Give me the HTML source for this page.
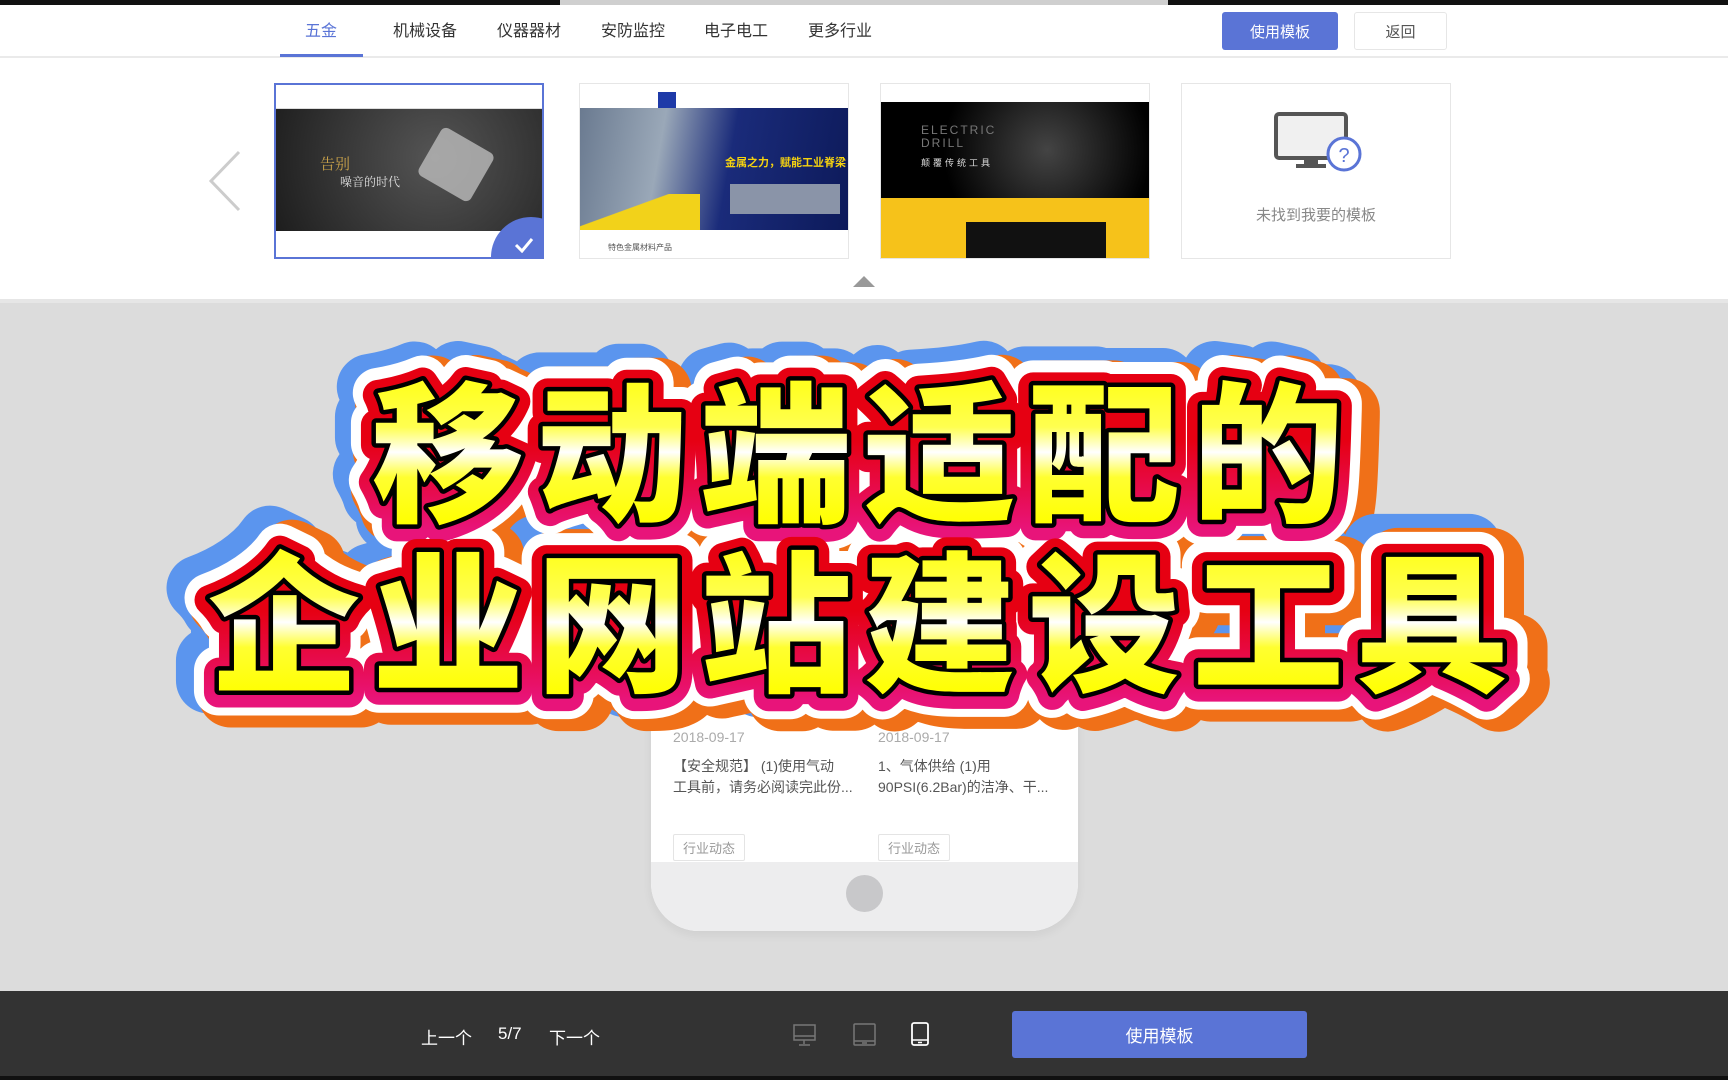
<!DOCTYPE html>
<html><head><meta charset="utf-8"><style>
*{margin:0;padding:0;box-sizing:border-box}
body{width:1728px;height:1080px;overflow:hidden;position:relative;background:#dcdcdc;font-family:"Liberation Sans","Noto Sans CJK SC",sans-serif}
.abs{position:absolute}
#top{left:0;top:0;width:1728px;height:303px;background:#fff;border-bottom:4px solid #e6e6e6}
#blk{left:0;top:0;width:1728px;height:5px;background:#111}
#blk i{position:absolute;left:560px;width:608px;top:0;height:5px;background:#cfcfcf}
#hdr{left:0;top:5px;width:1728px;height:53px;border-bottom:2px solid #eaeaea}
.tab{position:absolute;top:12px;font-size:16px;color:#333;transform:translateX(-50%)}
.btn{position:absolute;top:7px;height:38px;border-radius:3px;font-size:15px;display:flex;align-items:center;justify-content:center}
.card{position:absolute;top:83px;width:270px;height:176px;overflow:hidden;border:1px solid #e6e6e6;background:#fff}
#grey{left:0;top:307px;width:1728px;height:684px;background:#dcdcdc}
#phone{left:651px;top:560px;width:427px;height:371px;background:#fff;border-radius:0 0 48px 48px;overflow:hidden;box-shadow:0 4px 10px rgba(0,0,0,.06)}
.pt{position:absolute;font-size:14px;color:#555;line-height:21px}
.tag{position:absolute;border:1px solid #e4e4e4;color:#999;font-size:13px;padding:3px 9px;border-radius:2px}
#bar{left:0;top:991px;width:1728px;height:89px;background:#333}
.bt{position:absolute;top:1024px;color:#fff;font-size:17px}
svg text.t{font-family:"Noto Sans CJK SC","WenQuanYi Zen Hei",sans-serif;font-weight:900;font-size:152px;letter-spacing:12px;stroke-linejoin:round;stroke-linecap:round}
</style></head><body>
<div id="top" class="abs"></div>
<div id="blk" class="abs"><i></i></div>
<div id="hdr" class="abs">
<div class="tab" style="left:321px;color:#5a74d6">五金</div>
<div style="position:absolute;left:280px;top:49px;width:83px;height:3px;background:#5a74d6"></div>
<div class="tab" style="left:425px">机械设备</div>
<div class="tab" style="left:529px">仪器器材</div>
<div class="tab" style="left:633px">安防监控</div>
<div class="tab" style="left:736px">电子电工</div>
<div class="tab" style="left:840px">更多行业</div>
<div class="btn" style="left:1222px;width:116px;background:#5a74d6;color:#fff">使用模板</div>
<div class="btn" style="left:1354px;width:93px;border:1px solid #e6e6e6;color:#555">返回</div>
</div>
<svg class="abs" style="left:206px;top:150px" width="36" height="62"><path d="M33 2 L5 31 L33 60" fill="none" stroke="#ccc" stroke-width="3"/></svg>
<div class="card" style="left:274px;border:2px solid #5a74d6">
 <div class="abs" style="left:0;top:0;width:100%;height:24px;background:#fff;border-bottom:1px solid #ddd"></div>
 <div class="abs" style="left:0;top:24px;width:100%;height:122px;background:radial-gradient(circle at 60% 40%,#555,#1d1d1d)"></div>
 <div class="abs" style="left:44px;top:68px;color:#c9a24a;font-size:15px;font-family:'Noto Serif CJK SC',serif">告别</div>
 <div class="abs" style="left:64px;top:88px;color:#ddd;font-size:12px;font-family:'Noto Serif CJK SC',serif">噪音的时代</div>
 <div class="abs" style="left:150px;top:52px;width:60px;height:55px;background:#bbb;transform:rotate(30deg);border-radius:6px;opacity:.8"></div>
 <div class="abs" style="left:215px;top:132px;width:80px;height:80px;border-radius:50%;background:#5a74d6"></div>
 <svg class="abs" style="left:238px;top:152px" width="20" height="16"><path d="M2 8 L8 14 L18 2" stroke="#fff" stroke-width="3" fill="none"/></svg>
</div>
<div class="card" style="left:579px">
 <div class="abs" style="left:0;top:0;width:100%;height:24px;background:#fff"></div>
 <div class="abs" style="left:78px;top:8px;width:18px;height:16px;background:#1e3aa8"></div>
 <div class="abs" style="left:0;top:24px;width:100%;height:122px;background:linear-gradient(100deg,#6a7a90 0%,#9aa8b8 30%,#1a2b7a 55%,#0d1a5a 100%)"></div>
 <div class="abs" style="left:0;top:110px;width:120px;height:36px;background:linear-gradient(160deg,transparent 40%,#f2d21a 41%)"></div>
 <div class="abs" style="left:145px;top:70px;color:#f5d20f;font-size:11px;font-weight:bold">金属之力，赋能工业脊梁</div>
 <div class="abs" style="left:150px;top:100px;width:110px;height:30px;background:#8a94a8"></div>
 <div class="abs" style="left:28px;top:158px;color:#555;font-size:8px">特色金属材料产品</div>
</div>
<div class="card" style="left:880px">
 <div class="abs" style="left:0;top:0;width:100%;height:18px;background:#fff"></div>
 <div class="abs" style="left:0;top:18px;width:100%;height:96px;background:radial-gradient(circle at 62% 50%,#444,#000 60%)"></div>
 <div class="abs" style="left:40px;top:40px;color:#777;font-size:12px;letter-spacing:2px;line-height:13px">ELECTRIC<br>DRILL</div>
 <div class="abs" style="left:40px;top:72px;color:#ddd;font-size:9px;letter-spacing:3px">颠覆传统工具</div>
 <div class="abs" style="left:0;top:114px;width:100%;height:62px;background:#f6c21a"></div>
 <div class="abs" style="left:85px;top:138px;width:140px;height:38px;background:#111"></div>
</div>
<div class="card" style="left:1181px">
 <svg class="abs" style="left:92px;top:28px" width="90" height="60"><rect x="2" y="2" width="70" height="44" rx="3" fill="#f0f0f0" stroke="#555" stroke-width="4"/><rect x="30" y="46" width="14" height="6" fill="#555"/><rect x="22" y="52" width="30" height="4" fill="#555"/><circle cx="70" cy="42" r="16" fill="#fff" stroke="#5a74d6" stroke-width="3"/><text x="70" y="50" font-size="20" fill="#5a74d6" text-anchor="middle" font-family="Liberation Sans">?</text></svg>
 <div class="abs" style="left:0;width:100%;top:120px;text-align:center;color:#888;font-size:15px">未找到我要的模板</div>
</div>
<svg class="abs" style="left:853px;top:275px" width="22" height="12"><path d="M0 12 L11 1 L22 12Z" fill="#999"/></svg>
<div id="grey" class="abs"></div>
<div id="phone" class="abs">
 <div class="pt" style="left:22px;top:167px;color:#aaa">2018-09-17</div>
 <div class="pt" style="left:227px;top:167px;color:#aaa">2018-09-17</div>
 <div class="pt" style="left:22px;top:196px">【安全规范】 (1)使用气动<br>工具前，请务必阅读完此份...</div>
 <div class="pt" style="left:227px;top:196px">1、气体供给 (1)用<br>90PSI(6.2Bar)的洁净、干...</div>
 <div class="tag" style="left:22px;top:274px">行业动态</div>
 <div class="tag" style="left:227px;top:274px">行业动态</div>
 <div class="abs" style="left:0;top:302px;width:100%;height:69px;background:#ededee"></div>
 <div class="abs" style="left:195px;top:315px;width:37px;height:37px;border-radius:50%;background:#c8c8ca"></div>
</div>
<div id="bar" class="abs"></div>
<div class="abs" style="left:0;top:1076px;width:1728px;height:4px;background:#111"></div>
<div class="bt" style="left:421px">上一个</div>
<div class="bt" style="left:498px">5/7</div>
<div class="bt" style="left:549px">下一个</div>
<svg class="abs" style="left:793px;top:1023px" width="24" height="24"><rect x="1" y="2" width="21" height="15" fill="none" stroke="#777" stroke-width="1.5"/><path d="M1 13H22M11 17V21M6 22H17" stroke="#777" stroke-width="1.5"/></svg>
<svg class="abs" style="left:853px;top:1023px" width="24" height="24"><rect x="1" y="1" width="21" height="21" rx="1" fill="none" stroke="#777" stroke-width="1.5"/><path d="M1 18H22M9 20H14" stroke="#777" stroke-width="1.5"/></svg>
<svg class="abs" style="left:911px;top:1022px" width="18" height="26"><rect x="1" y="1" width="16" height="22" rx="2" fill="none" stroke="#fff" stroke-width="1.8"/><path d="M1 18H17M7 20.5H11" stroke="#fff" stroke-width="1.5"/></svg>
<div class="abs" style="left:1012px;top:1011px;width:295px;height:47px;background:#5a74d6;border-radius:3px;color:#fff;font-size:17px;display:flex;align-items:center;justify-content:center">使用模板</div>

<svg class="abs" style="left:0;top:0" width="1728" height="1080">
<defs>
<linearGradient id="g1" gradientUnits="userSpaceOnUse" x1="0" y1="385" x2="0" y2="525"><stop offset="0" stop-color="#ffff20"/><stop offset=".3" stop-color="#ffff50"/><stop offset=".48" stop-color="#fff"/><stop offset=".66" stop-color="#ffff30"/><stop offset="1" stop-color="#ffff00"/></linearGradient>
<linearGradient id="g2" gradientUnits="userSpaceOnUse" x1="0" y1="555" x2="0" y2="695"><stop offset="0" stop-color="#ffff20"/><stop offset=".3" stop-color="#ffff50"/><stop offset=".48" stop-color="#fff"/><stop offset=".66" stop-color="#ffff30"/><stop offset="1" stop-color="#ffff00"/></linearGradient>
<linearGradient id="r1" gradientUnits="userSpaceOnUse" x1="0" y1="380" x2="0" y2="530"><stop offset=".4" stop-color="#e60012"/><stop offset="1" stop-color="#e8147a"/></linearGradient>
<linearGradient id="r2" gradientUnits="userSpaceOnUse" x1="0" y1="550" x2="0" y2="700"><stop offset=".4" stop-color="#e60012"/><stop offset="1" stop-color="#e8147a"/></linearGradient>
</defs>
<g text-anchor="middle">
<text class="t" x="856" y="504" fill="#5b95ee" stroke="#5b95ee" stroke-width="66">移动端适配的</text>
<text class="t" x="874" y="518" fill="#f07018" stroke="#f07018" stroke-width="66">移动端适配的</text>
<text class="t" x="864" y="676" fill="#5b95ee" stroke="#5b95ee" stroke-width="66" transform="translate(-10,-6)">企业网站建设工具</text>
<text class="t" x="864" y="676" fill="#f07018" stroke="#f07018" stroke-width="66" transform="translate(12,8)">企业网站建设工具</text>
<text class="t" x="864" y="510" fill="#fff" stroke="#fff" stroke-width="50">移动端适配的</text>
<text class="t" x="864" y="680" fill="#fff" stroke="#fff" stroke-width="50">企业网站建设工具</text>
<text class="t" x="864" y="512" fill="url(#r1)" stroke="url(#r1)" stroke-width="30">移动端适配的</text>
<text class="t" x="864" y="682" fill="url(#r2)" stroke="url(#r2)" stroke-width="30">企业网站建设工具</text>
<text class="t" x="864" y="510" fill="#000" stroke="#000" stroke-width="9">移动端适配的</text>
<text class="t" x="864" y="680" fill="#000" stroke="#000" stroke-width="9">企业网站建设工具</text>
<text class="t" x="864" y="510" fill="url(#g1)">移动端适配的</text>
<text class="t" x="864" y="680" fill="url(#g2)">企业网站建设工具</text>
</g>
</svg>
</body></html>
